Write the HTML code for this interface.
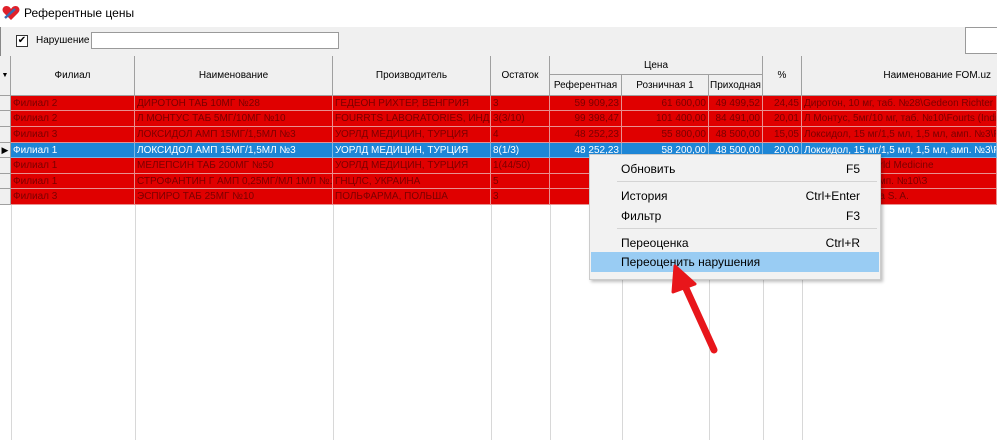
<!DOCTYPE html><html><head><meta charset="utf-8"><style>
*{margin:0;padding:0;box-sizing:border-box}
body{width:997px;height:440px;overflow:hidden;background:#fff;font-family:"Liberation Sans",sans-serif;position:relative}
.a{position:absolute}
.h{position:absolute;background:#f0f0f0;border-right:1px solid #a0a0a0;border-bottom:1px solid #a0a0a0;font-size:10px;color:#000;display:flex;align-items:center;justify-content:center}
.c{position:absolute;font-size:10px;white-space:nowrap;overflow:hidden;height:16px;line-height:15px;padding:0 2px;border-right:1px solid #e89090;border-bottom:1px solid #e89090;background:#e00000;color:#7a0000}
.s{background:#1e86d6;color:#fff;border-color:#7ab8e8}
.r{text-align:right}
.v{position:absolute;top:205px;height:235px;border-left:1px solid #d8d8d8}
.m{position:absolute;left:31px;font-size:12px;color:#000}
.k{position:absolute;right:20px;font-size:12px}
</style></head><body>
<div class="a" style="left:0;top:0;width:997px;height:27px;background:#fff"></div>
<svg class="a" style="left:2px;top:5px" width="18" height="16" viewBox="0 0 18 16"><path d="M9 15 L2 8 C-1 5 1 1 4.5 1 C7 1 8.5 3 9 4 C9.5 3 11 1 13.5 1 C17 1 19 5 16 8 Z" fill="#e0202a"/><path d="M3 13 L13 4" stroke="#3a6ab0" stroke-width="2.5"/></svg>
<div class="a" style="left:24px;top:6px;font-size:12px">Референтные цены</div>
<div class="a" style="left:0;top:27px;width:997px;height:29px;background:#f0f0f0;border-left:1px solid #888"></div>
<div class="a" style="left:16px;top:35px;width:12px;height:12px;border:1px solid #333;background:#fff;font-size:10px;line-height:10px;text-align:center">✔</div>
<div class="a" style="left:36px;top:35px;font-size:10px">Нарушение</div>
<div class="a" style="left:91px;top:32px;width:248px;height:17px;background:#fff;border:1px solid #9a9a9a"></div>
<div class="a" style="left:965px;top:27px;width:40px;height:27px;background:#fff;border:1px solid #9a9a9a"></div>
<div class="h" style="left:0;top:56px;width:11px;height:40px;font-size:7px">▼</div>
<div class="h" style="left:11px;top:56px;width:124px;height:40px">Филиал</div>
<div class="h" style="left:135px;top:56px;width:198px;height:40px">Наименование</div>
<div class="h" style="left:333px;top:56px;width:158px;height:40px">Производитель</div>
<div class="h" style="left:491px;top:56px;width:59px;height:40px">Остаток</div>
<div class="h" style="left:550px;top:56px;width:213px;height:19px">Цена</div>
<div class="h" style="left:550px;top:75px;width:72px;height:21px">Референтная</div>
<div class="h" style="left:622px;top:75px;width:87px;height:21px">Розничная 1</div>
<div class="h" style="left:709px;top:75px;width:54px;height:21px">Приходная</div>
<div class="h" style="left:763px;top:56px;width:39px;height:40px">%</div>
<div class="h" style="left:802px;top:56px;width:195px;height:40px;justify-content:flex-end;padding-right:6px;border-right:none">Наименование FOM.uz</div>
<div id="rows"></div>
<div class="v" style="left:135px"></div><div class="v" style="left:333px"></div><div class="v" style="left:491px"></div><div class="v" style="left:550px"></div><div class="v" style="left:622px"></div><div class="v" style="left:709px"></div><div class="v" style="left:763px"></div><div class="v" style="left:802px"></div>
<div class="v" style="left:11px"></div>
<script>
var d=[["Филиал 2","ДИРОТОН ТАБ 10МГ №28","ГЕДЕОН РИХТЕР, ВЕНГРИЯ","3","59 909,23","61 600,00","49 499,52","24,45","Диротон, 10 мг, таб. №28\\Gedeon Richter Pl"],
["Филиал 2","Л МОНТУС ТАБ 5МГ/10МГ №10","FOURRTS LABORATORIES, ИНДИЯ","3(3/10)","99 398,47","101 400,00","84 491,00","20,01","Л Монтус, 5мг/10 мг, таб. №10\\Fourts (Indi"],
["Филиал 3","ЛОКСИДОЛ АМП 15МГ/1,5МЛ №3","УОРЛД МЕДИЦИН, ТУРЦИЯ","4","48 252,23","55 800,00","48 500,00","15,05","Локсидол, 15 мг/1,5 мл, 1,5 мл, амп. №3\\Pl"],
["Филиал 1","ЛОКСИДОЛ АМП 15МГ/1,5МЛ №3","УОРЛД МЕДИЦИН, ТУРЦИЯ","8(1/3)","48 252,23","58 200,00","48 500,00","20,00","Локсидол, 15 мг/1,5 мл, 1,5 мл, амп. №3\\Pl"],
["Филиал 1","МЕЛЕПСИН ТАБ 200МГ №50","УОРЛД МЕДИЦИН, ТУРЦИЯ","1(44/50)","71 ","","","","мг, таб. №50\\World Medicine"],
["Филиал 1","СТРОФАНТИН Г АМП 0,25МГ/МЛ 1МЛ №10","ГНЦЛС, УКРАИНА","5","18","","","","25 мг/мл 1 мл, амп. №10\\З"],
["Филиал 3","ЭСПИРО ТАБ 25МГ №10","ПОЛЬФАРМА, ПОЛЬША","3","92","","","","б. №10\\Polphama S. A."]];
var x=[11,135,333,491,550,622,709,763,802,997],h="",ys=[96,111,127,143,158,174,189,205];
d.forEach(function(r,i){var y=ys[i],hh=ys[i+1]-y,s=i==3?" s":"";
h+='<div class="a" style="left:0;top:'+y+'px;width:11px;height:'+hh+'px;background:#f0f0f0;border-right:1px solid #a0a0a0;border-bottom:1px solid #a0a0a0;font-size:9px;line-height:'+hh+'px;text-align:center">'+(i==3?"▶":"")+'</div>';
r.forEach(function(t,j){h+='<div class="c'+s+(j>=4&&j<=7?" r":"")+'" style="left:'+x[j]+'px;top:'+y+'px;width:'+(x[j+1]-x[j])+'px;height:'+hh+'px">'+t+'</div>'});});
document.getElementById("rows").innerHTML=h;
</script>
<div class="a" style="left:589px;top:154px;width:292px;height:126px;background:#f2f2f2;border:1px solid #ccc;box-shadow:2px 2px 3px rgba(0,0,0,.25)">
<div class="m" style="top:7px">Обновить</div><div class="k" style="top:7px">F5</div>
<div class="a" style="left:27px;top:26px;width:260px;border-top:1px solid #d4d4d4"></div>
<div class="m" style="top:34px">История</div><div class="k" style="top:34px">Ctrl+Enter</div>
<div class="m" style="top:54px">Фильтр</div><div class="k" style="top:54px">F3</div>
<div class="a" style="left:27px;top:73px;width:260px;border-top:1px solid #d4d4d4"></div>
<div class="m" style="top:81px">Переоценка</div><div class="k" style="top:81px">Ctrl+R</div>
<div class="a" style="left:1px;top:97px;width:288px;height:20px;background:#99ccf3"></div>
<div class="m" style="top:100px">Переоценить нарушения</div>
</div>
<svg class="a" style="left:665px;top:262px" width="60" height="95"><path d="M49 88 L19 22" stroke="#e8161b" stroke-width="7" stroke-linecap="round"/><path d="M10 4 L30 22 L8 30 Z" fill="#e8161b" stroke="#e8161b" stroke-width="3" stroke-linejoin="round"/></svg>
</body></html>
